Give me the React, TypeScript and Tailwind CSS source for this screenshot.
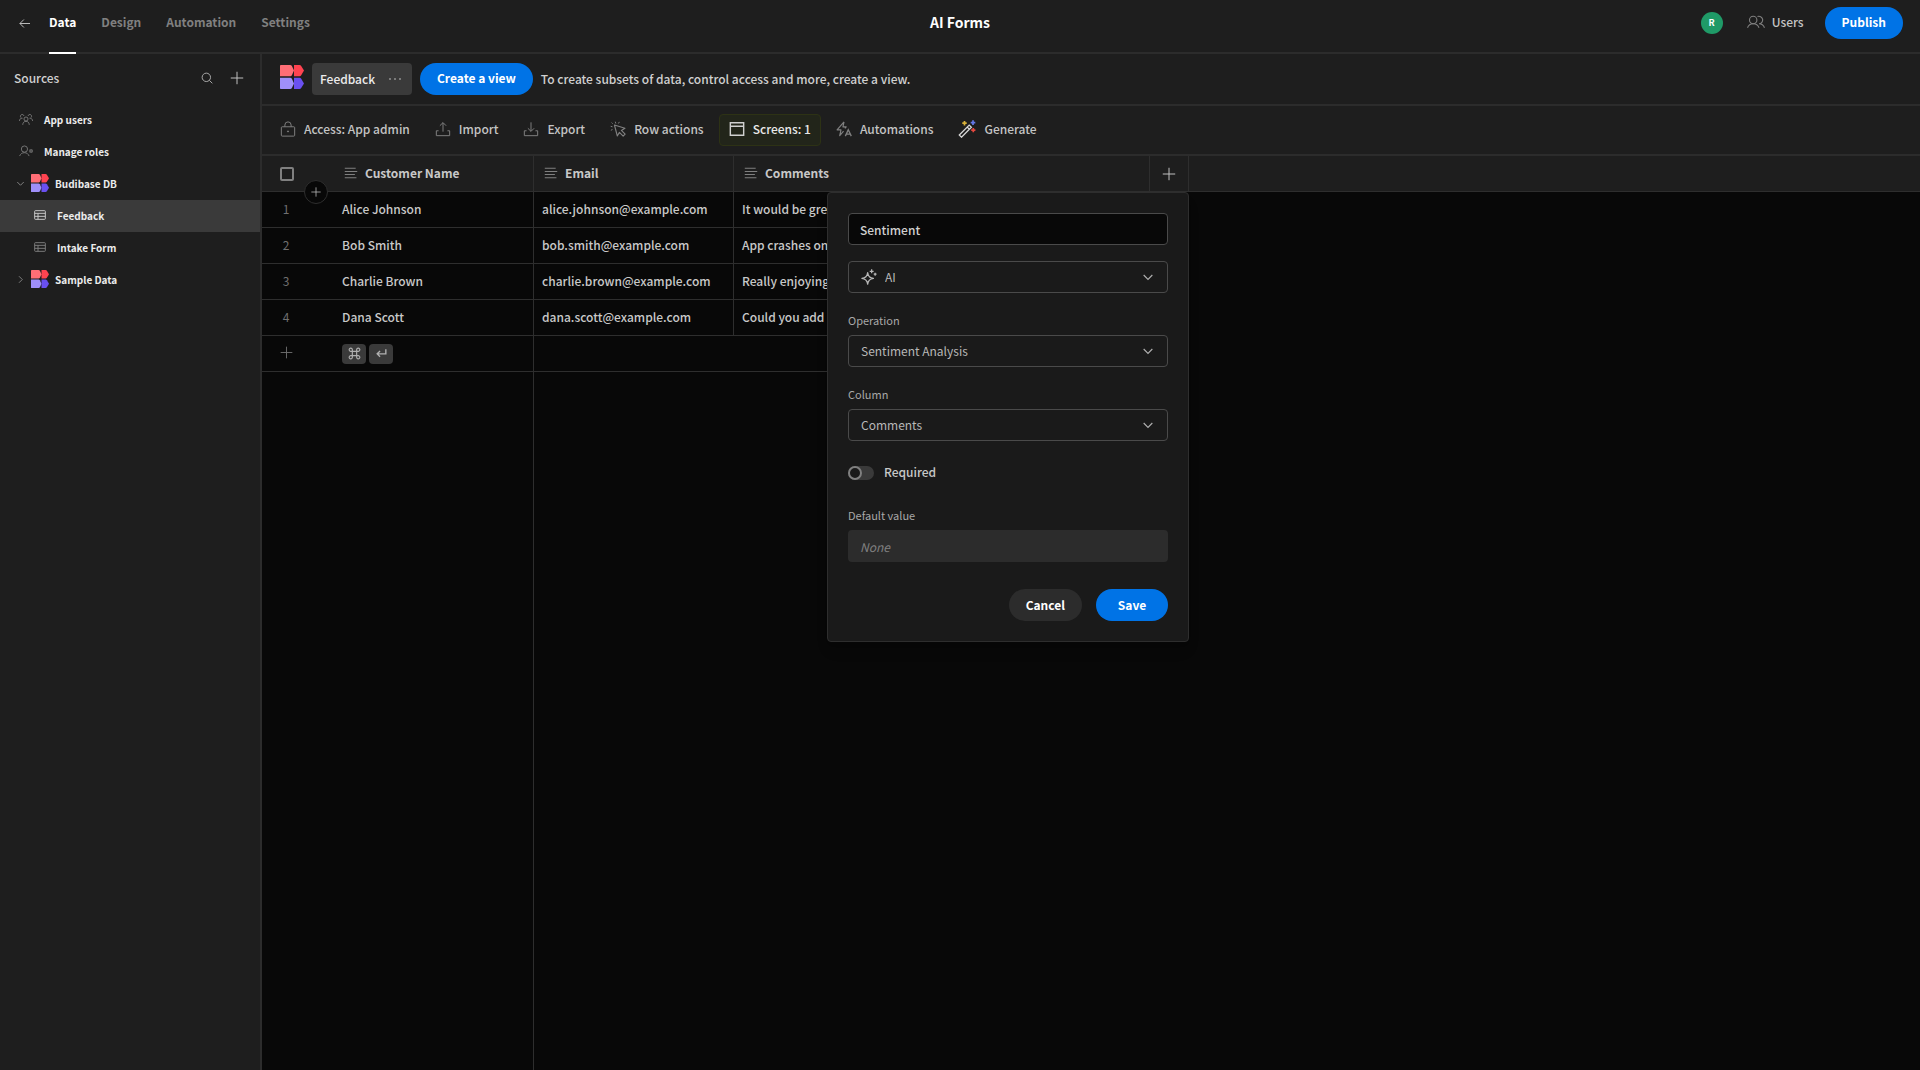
import React, { useState } from 'react';

type IconProps = { className?: string };

const rows = [
  { name: 'Alice Johnson', email: 'alice.johnson@example.com', comments: 'It would be great to have a dark mode option.' },
  { name: 'Bob Smith', email: 'bob.smith@example.com', comments: 'App crashes on startup after the last update.' },
  { name: 'Charlie Brown', email: 'charlie.brown@example.com', comments: 'Really enjoying the new features so far!' },
  { name: 'Dana Scott', email: 'dana.scott@example.com', comments: 'Could you add more export formats?' },
];

const tabs = ['Data', 'Design', 'Automation', 'Settings'];

const Icon: React.FC<IconProps & { children: React.ReactNode }> = ({ className, children }) => (
  <svg viewBox="0 0 18 18" fill="none" stroke="currentColor" strokeWidth="1.1" className={className} aria-hidden="true">
    {children}
  </svg>
);

const Logo: React.FC<IconProps> = ({ className }) => (
  <svg viewBox="0 0 24 24" className={className} aria-hidden="true">
    <path d="M0 .8C0 .3.3 0 .8 0H10.200C11 0 11.500.3 11.900.9L14 5.500L11.900 10.200C11.500 10.800 11 11.200 10.200 11.200H0Z" fill="#ff6e76" />
    <path d="M14 0H19.500C20.300 0 20.800.3 21.200.9L24 5.500L21.200 10.200C20.800 10.800 20.300 11.200 19.500 11.200H14Z" fill="#ff4350" />
    <path d="M0 12.800H10.200C11 12.800 11.500 13.100 11.900 13.700L14 18.400L11.900 23.100C11.500 23.700 11 24 10.200 24H.8C.3 24 0 23.700 0 23.200Z" fill="#9f8ff9" />
    <path d="M14 12.800H19.500C20.300 12.800 20.800 13.100 21.200 13.700L24 18.400L21.200 23.100C20.800 23.700 20.300 24 19.500 24H14Z" fill="#6a50f0" />
  </svg>
);

const PlusIcon: React.FC<IconProps> = ({ className }) => (
  <Icon className={className}>
    <path d="M9 2V16M2 9H16" />
  </Icon>
);

const ChevronIcon: React.FC<IconProps> = ({ className }) => (
  <Icon className={className}>
    <path d="M2.500 6L9 12.500L15.500 6" strokeWidth="1.700" />
  </Icon>
);

const UserGroupIcon: React.FC<IconProps> = ({ className }) => (
  <Icon className={className}>
    <circle cx="9" cy="9" r="2.600" />
    <path d="M4.800 16.500C5 13.500 6.500 12 9 12S13 13.500 13.200 16.500" />
    <path d="M3 7.500A2.300 2.300 0 1 1 6.400 5.200M15 7.500A2.300 2.300 0 1 0 11.600 5.200M.5 11.500C.8 9 2 8 4.500 8M17.500 11.500C17.200 9 16 8 13.500 8" />
  </Icon>
);

const UserGearIcon: React.FC<IconProps> = ({ className }) => (
  <Icon className={className}>
    <circle cx="7" cy="6.500" r="4" />
    <path d="M.8 15.500C2 12.500 4 11.200 7 11.200S11.500 12.300 13 15.500" />
    <circle cx="15.500" cy="9" r="1.500" />
    <path d="M15.500 6.500V7.500M15.500 10.500V11.500M13.300 7.700L14.200 8.200M16.800 9.800L17.700 10.300M17.700 7.700L16.800 8.200M13.300 10.300L14.200 9.800" />
  </Icon>
);

const UsersIcon: React.FC<IconProps> = ({ className }) => (
  <Icon className={className}>
    <circle cx="6.200" cy="7" r="3.700" />
    <path d="M.5 14.800C1.500 12 3.500 10.800 6.200 10.800S11 12 12 14.800" />
    <path d="M10.500 3.600A3.700 3.700 0 1 1 12 10.700C14.600 10.700 16.500 12 17.500 14.800" />
  </Icon>
);

const TableIcon: React.FC<IconProps> = ({ className }) => (
  <Icon className={className}>
    <rect x="1" y="2.500" width="16" height="13" rx="1" strokeWidth="1.400" />
    <path d="M1 6.500H17M1 11H17M6 6.500V15.500" strokeWidth="1.400" />
  </Icon>
);

const LockIcon: React.FC<IconProps> = ({ className }) => (
  <Icon className={className}>
    <rect x="1.500" y="6.500" width="15" height="10.500" rx="1" />
    <path d="M5.500 6.500V4.500A3.500 3.500 0 0 1 12.500 4.500V6.500" />
    <circle cx="9" cy="11.700" r=".6" fill="currentColor" />
  </Icon>
);

const ImportIcon: React.FC<IconProps> = ({ className }) => (
  <Icon className={className}>
    <path d="M4 11H1.500V16.500H16.500V11H14M9 12V2M5.500 5.300L9 1.800L12.500 5.300" />
  </Icon>
);

const ExportIcon: React.FC<IconProps> = ({ className }) => (
  <Icon className={className}>
    <path d="M4 11H1.500V16.500H16.500V11H14M9 1.500V11.500M5.500 8.200L9 11.700L12.500 8.200" />
  </Icon>
);

const RowActionsIcon: React.FC<IconProps> = ({ className }) => (
  <Icon className={className}>
    <path d="M5 4.500L16.800 8.200L12.800 10.600L17 14.800L14.800 17L10.600 12.800L8.200 16.800Z" strokeLinejoin="round" strokeWidth="1.300" />
    <path d="M6.500 2.800L6 .8M9.500 2.800L10.500 1M2.800 6.500L.8 6M2.800 9.500L1 10.500M3 3L1.800 1.800" />
  </Icon>
);

const ScreenIcon: React.FC<IconProps> = ({ className }) => (
  <Icon className={className}>
    <path d="M1.500 2H16.500V16H1.500ZM1.500 6H16.500" strokeWidth="1.600" />
  </Icon>
);

const AutomationIcon: React.FC<IconProps> = ({ className }) => (
  <Icon className={className}>
    <path d="M9 1L1.200 10H5.600L4.200 16.500L8.500 11.500M9 1L7.800 6.600H11.500L10 8.400" strokeLinejoin="round" strokeWidth="1.300" />
    <path d="M10.500 17L13.800 9.800L17.200 17M11.600 14.700H16" strokeWidth="1.500" />
  </Icon>
);

const WandIcon: React.FC<IconProps> = ({ className }) => (
  <Icon className={className}>
    <path d="M1.300 15L11.200 5.100L13.400 7.300L3.500 17.200ZM9.200 7.100L11.400 9.300" stroke="#d8d8d8" strokeWidth="1.300" />
    <path d="M6.500 1V5.400M4.300 3.200H8.700" stroke="#d9b23a" strokeWidth="1.700" />
    <path d="M15 .3V4.900M12.700 2.600H17.300" stroke="#6478e8" strokeWidth="1.700" />
    <path d="M15.300 8V12.200M13.200 10.100H17.400" stroke="#e5483f" strokeWidth="1.700" />
  </Icon>
);

const TextIcon: React.FC<IconProps> = ({ className }) => (
  <Icon className={className}>
    <path d="M1 3H15M1 7H17M1 11H14M1 15H16" strokeWidth="1.300" />
  </Icon>
);

const SparkleIcon: React.FC<IconProps> = ({ className }) => (
  <Icon className={className}>
    <path d="M7.500 4C8 8.200 9.800 10 14 10.500C9.800 11 8 12.800 7.500 17C7 12.800 5.200 11 1 10.500C5.200 10 7 8.200 7.500 4Z" strokeWidth="1.400" strokeLinejoin="round" />
    <path d="M12 .4V4.800M9.800 2.600H14.200M15.900 4.300V7.500M14.300 5.900H17.500" strokeWidth="1.400" />
  </Icon>
);

const ToolbarButton: React.FC<{ icon: React.ReactNode; label: string; active?: boolean }> = ({ icon, label, active }) => (
  <button
    type="button"
    className={
      active
        ? 'flex h-8 items-center gap-2 rounded border border-[#2d3215] bg-[#22251a] px-[9px] pb-0.5 text-[#e8e8e8]'
        : 'flex h-8 items-center gap-2 px-[10px] pb-0.5 text-[#c4c4c4]'
    }
  >
    {icon}
    {label}
  </button>
);

type SelectProps = { id: string; label: string; hideLabel?: boolean; options: string[]; icon?: React.ReactNode };

const SelectField: React.FC<SelectProps> = ({ id, label, hideLabel, options, icon }) => (
  <div>
    {!hideLabel && (
      <label htmlFor={id} className="mb-1.5 block text-[11px] leading-[18px] text-[#a8a8a8]">
        {label}
      </label>
    )}
    <div className="grid h-8 items-center rounded border border-[#4a4a4a] focus-within:border-[#6a6a6a]">
      <select
        id={id}
        aria-label={label}
        className={
          icon
            ? 'col-start-1 row-start-1 h-full w-full appearance-none bg-transparent pl-9 text-[12px] text-[#b8b8b8] outline-none'
            : 'col-start-1 row-start-1 h-full w-full appearance-none bg-transparent pl-3 text-[12px] text-[#b8b8b8] outline-none'
        }
      >
        {options.map((o) => (
          <option key={o}>{o}</option>
        ))}
      </select>
      <div className="pointer-events-none col-start-1 row-start-1 flex items-center justify-between px-3">
        <span>{icon}</span>
        <ChevronIcon className="mr-px size-3 text-[#b0b0b0]" />
      </div>
    </div>
  </div>
);

const ColumnPanel: React.FC = () => {
  const [name, setName] = useState('Sentiment');
  const [required, setRequired] = useState(false);

  return (
    <form
      onSubmit={(e) => e.preventDefault()}
      className="absolute top-full -right-px z-10 mt-px flex w-[362px] flex-col rounded border border-[#2e2e2e] bg-[#1a1a1a] p-5 text-left font-normal shadow-lg"
    >
      <input
        aria-label="Column name"
        value={name}
        onChange={(e) => setName(e.target.value)}
        className="mb-4 h-8 rounded border border-[#4a4a4a] bg-[#080808] px-[11px] text-[12px] font-medium text-[#d0d0d0] outline-none"
      />
      <SelectField id="type" label="Type" hideLabel options={['AI', 'Text', 'Number']} icon={<SparkleIcon className="size-4 text-[#b8b8b8]" />} />
      <div className="mt-[18px] flex flex-col gap-[18px]">
        <SelectField id="operation" label="Operation" options={['Sentiment Analysis', 'Translate', 'Categorise Text']} />
        <SelectField id="column" label="Column" options={['Comments', 'Customer Name', 'Email']} />
      </div>
      <label className="mt-4 flex h-8 cursor-pointer items-center gap-[10px] text-[12px] font-medium text-[#c8c8c8]">
        <input
          type="checkbox"
          role="switch"
          checked={required}
          onChange={(e) => setRequired(e.target.checked)}
          className="h-[14px] w-[26px] appearance-none rounded-full bg-[#3a3a3a] before:block before:size-[14px] before:rounded-full before:border-2 before:border-[#808080] before:bg-[#1a1a1a] checked:bg-[#0073e6] checked:before:ml-3"
        />
        <span className="pb-0.5">Required</span>
      </label>
      <label htmlFor="default" className="mt-[17px] mb-1.5 text-[11px] leading-[18px] text-[#a8a8a8]">
        Default value
      </label>
      <input
        id="default"
        placeholder="None"
        className="h-8 rounded bg-[#2c2c2c] px-3 text-[12px] outline-none placeholder:text-[#808080] placeholder:italic"
      />
      <div className="mt-[27px] flex justify-end gap-[14px] text-[12px] font-bold text-white">
        <button type="button" className="h-8 rounded-full bg-[#2c2c2c] px-[17px]">
          Cancel
        </button>
        <button type="submit" className="h-8 w-[72px] rounded-full bg-[#0073e6]">
          Save
        </button>
      </div>
    </form>
  );
};

const Header: React.FC = () => (
  <header className="grid h-[54px] grid-cols-[1fr_auto_1fr] border-b-2 border-[#2c2c2c] text-[12px]">
    <div className="flex pl-[19px]">
      <button type="button" aria-label="Back" className="mt-[18px] mr-[19px] size-[11px] text-[#c8c8c8]">
        <Icon className="size-[11px]">
          <path d="M18 9H1.500M8 2.500L1.500 9L8 15.500" strokeWidth="1.500" />
        </Icon>
      </button>
      <nav className="flex gap-[25px] font-bold">
        {tabs.map((tab, i) => (
          <a
            key={tab}
            href={`#${tab.toLowerCase()}`}
            className={i === 0 ? 'h-[54px] border-b-2 border-white pt-3 leading-5 text-white' : 'h-[54px] pt-3 leading-5 text-[#808080]'}
          >
            {tab}
          </a>
        ))}
      </nav>
    </div>
    <h1 className="pt-3 text-[14px] leading-5 font-bold text-white">AI Forms</h1>
    <div className="flex items-start justify-end pt-[7px] pr-[17px]">
      <div className="flex h-8 items-center">
        <span className="mr-6 flex size-[22px] items-center justify-center rounded-full bg-[#1f9a67] text-[9px] font-bold text-white">R</span>
        <button type="button" className="mr-[21px] flex items-center gap-[7px] pb-0.5 font-medium text-[#c4c4c4]">
          <UsersIcon className="size-[18px] text-[#808080]" />
          Users
        </button>
        <button type="button" className="h-8 rounded-full bg-[#0073e6] px-[17px] pb-0.5 font-bold text-white">
          Publish
        </button>
      </div>
    </div>
  </header>
);

const Sidebar: React.FC = () => (
  <aside className="w-[262px] shrink-0 border-r-2 border-[#2c2c2c]">
    <div className="flex h-[50px] items-center pr-[15px] pb-0.5 pl-[14px]">
      <h2 className="flex-1 text-[12px] font-medium text-[#d0d0d0]">Sources</h2>
      <button type="button" aria-label="Search" className="mr-4 text-[#b0b0b0]">
        <Icon className="size-3">
          <circle cx="8" cy="8" r="6.300" strokeWidth="1.400" />
          <path d="M12.500 12.500L17 17" strokeWidth="1.400" />
        </Icon>
      </button>
      <button type="button" aria-label="Add source" className="text-[#c4c4c4]">
        <PlusIcon className="size-4" />
      </button>
    </div>
    <nav className="text-[10px] font-bold text-[#ececec] [&>a]:flex [&>a]:h-8 [&>a]:items-center [&>a]:pb-0.5">
      <a href="#users" className="pl-[19px]">
        <UserGroupIcon className="mr-[11px] size-[14px] text-[#808080]" />
        App users
      </a>
      <a href="#roles" className="pl-[19px]">
        <UserGearIcon className="mr-[11px] size-[14px] text-[#808080]" />
        Manage roles
      </a>
      <a href="#budibase" className="pl-4">
        <ChevronIcon className="mr-[6px] size-[9px] text-[#909090]" />
        <Logo className="mr-[6px] size-[18px]" />
        Budibase DB
      </a>
      <a href="#feedback" className="bg-[#3a3a3a] pl-[34px]">
        <TableIcon className="mr-[11px] size-3 text-[#d0d0d0]" />
        Feedback
      </a>
      <a href="#intake" className="pl-[34px]">
        <TableIcon className="mr-[11px] size-3 text-[#808080]" />
        Intake Form
      </a>
      <a href="#sample" className="pl-4">
        <ChevronIcon className="mr-[6px] size-[9px] -rotate-90 text-[#909090]" />
        <Logo className="mr-[6px] size-[18px]" />
        Sample Data
      </a>
    </nav>
  </aside>
);

const Grid: React.FC = () => (
  <div className="flex flex-1 flex-col bg-[#080808]">
    <table className="w-full table-fixed border-separate border-spacing-0 text-left text-[12px] font-medium text-[#c8c8c8]">
      <colgroup>
        <col className="w-[72px]" />
        <col className="w-[200px]" />
        <col className="w-[200px]" />
        <col className="w-[416px]" />
        <col className="w-[39px]" />
        <col />
      </colgroup>
      <thead className="bg-[#1e1e1e]">
        <tr className="h-9 [&>th]:border-b [&>th]:border-[#2e2e2e] [&>th]:p-0 [&>th]:font-bold">
          <th className="relative">
            <input
              type="checkbox"
              aria-label="Select all rows"
              className="ml-[18px] block size-[14px] appearance-none rounded-xs border-2 border-[#808080]"
            />
            <button
              type="button"
              aria-label="Insert row"
              className="absolute top-6 right-[6px] flex size-6 items-center justify-center rounded-full border border-[#2e2e2e] bg-[#080808] text-[#c4c4c4]"
            >
              <PlusIcon className="size-3" />
            </button>
          </th>
          {['Customer Name', 'Email', 'Comments'].map((h) => (
            <th key={h} className="border-r">
              <div className="flex items-center gap-[7px] pb-0.5 pl-[10px]">
                <TextIcon className="size-[14px] text-[#808080]" />
                {h}
              </div>
            </th>
          ))}
          <th className="relative border-r">
            <button type="button" aria-label="Add column" className="mx-auto block text-[#c4c4c4]">
              <PlusIcon className="size-4" />
            </button>
            <ColumnPanel />
          </th>
          <th />
        </tr>
      </thead>
      <tbody>
        {rows.map((row, i) => (
          <tr key={row.name} className="h-9 [&>td]:border-b [&>td]:border-[#2e2e2e] [&>td]:pt-0 [&>td]:pb-0.5">
            <td className="pr-6 pl-0 text-center font-normal text-[#707070]">{i + 1}</td>
            <td className="border-r px-2">{row.name}</td>
            <td className="border-r px-2">{row.email}</td>
            <td className="truncate px-2">{row.comments}</td>
          </tr>
        ))}
        <tr className="h-9 [&>td]:border-b [&>td]:border-[#2e2e2e] [&>td]:py-0">
          <td className="px-0">
            <button type="button" aria-label="Add row" className="mb-0.5 ml-[17px] block text-[#707070]">
              <PlusIcon className="size-[15px]" />
            </button>
          </td>
          <td className="border-r px-2">
            <div className="flex gap-[3px] text-[#b0b0b0]">
              <kbd className="flex h-5 w-6 items-center justify-center rounded bg-[#3a3a3a]">
                <Icon className="size-[13px]">
                  <path d="M6 6V12M12 6V12M6 6H12M6 12H12M6 6H4A2.200 2.200 0 1 1 6 4ZM12 6V4A2.200 2.200 0 1 1 14 6ZM6 12V14A2.200 2.200 0 1 1 4 12ZM12 12H14A2.200 2.200 0 1 1 12 14Z" strokeWidth="1.600" />
                </Icon>
              </kbd>
              <kbd className="flex h-5 w-6 items-center justify-center rounded bg-[#3a3a3a]">
                <Icon className="size-[13px]">
                  <path d="M15 3V9.500H3.500M7 5.500L3 9.500L7 13.500" strokeWidth="1.900" />
                </Icon>
              </kbd>
            </div>
          </td>
          <td />
          <td />
        </tr>
      </tbody>
    </table>
    <div className="w-[272px] flex-1 border-r border-[#2e2e2e]" />
  </div>
);

const App: React.FC = () => (
  <div className="flex min-h-screen flex-col bg-[#1e1e1e] font-['Noto_Sans_CJK_SC',sans-serif]">
    <Header />
    <div className="flex flex-1">
      <Sidebar />
      <main className="flex min-w-0 flex-1 flex-col">
        <div className="flex h-[52px] items-center border-b-2 border-[#2c2c2c] pl-[18px] text-[12px] font-medium">
          <Logo className="mr-2 mb-1 size-6" />
          <button type="button" className="mr-2 flex h-8 w-[100px] items-center justify-between rounded bg-[#3a3a3a] pr-[11px] pl-2 text-[#ececec]">
            Feedback
            <svg viewBox="0 0 12 2" fill="#909090" className="h-[2px] w-3" aria-hidden="true">
              <circle cx="1" cy="1" r="1" />
              <circle cx="6" cy="1" r="1" />
              <circle cx="11" cy="1" r="1" />
            </svg>
          </button>
          <button type="button" className="mr-2 h-8 rounded-full bg-[#0073e6] px-[17px] pb-0.5 font-bold text-white">
            Create a view
          </button>
          <p className="text-[#d0d0d0]">To create subsets of data, control access and more, create a view.</p>
        </div>
        <div className="flex h-[50px] items-center gap-[5px] border-b-2 border-[#2c2c2c] pl-2 text-[12px] font-medium">
          <ToolbarButton icon={<LockIcon className="size-4 text-[#808080]" />} label="Access: App admin" />
          <ToolbarButton icon={<ImportIcon className="size-4 text-[#808080]" />} label="Import" />
          <ToolbarButton icon={<ExportIcon className="size-4 text-[#808080]" />} label="Export" />
          <ToolbarButton icon={<RowActionsIcon className="size-4 text-[#808080]" />} label="Row actions" />
          <ToolbarButton icon={<ScreenIcon className="size-4 text-[#d0d0d0]" />} label="Screens: 1" active />
          <ToolbarButton icon={<AutomationIcon className="size-4 text-[#808080]" />} label="Automations" />
          <ToolbarButton icon={<WandIcon className="size-[18px]" />} label="Generate" />
        </div>
        <Grid />
      </main>
    </div>
  </div>
);

export default App;
